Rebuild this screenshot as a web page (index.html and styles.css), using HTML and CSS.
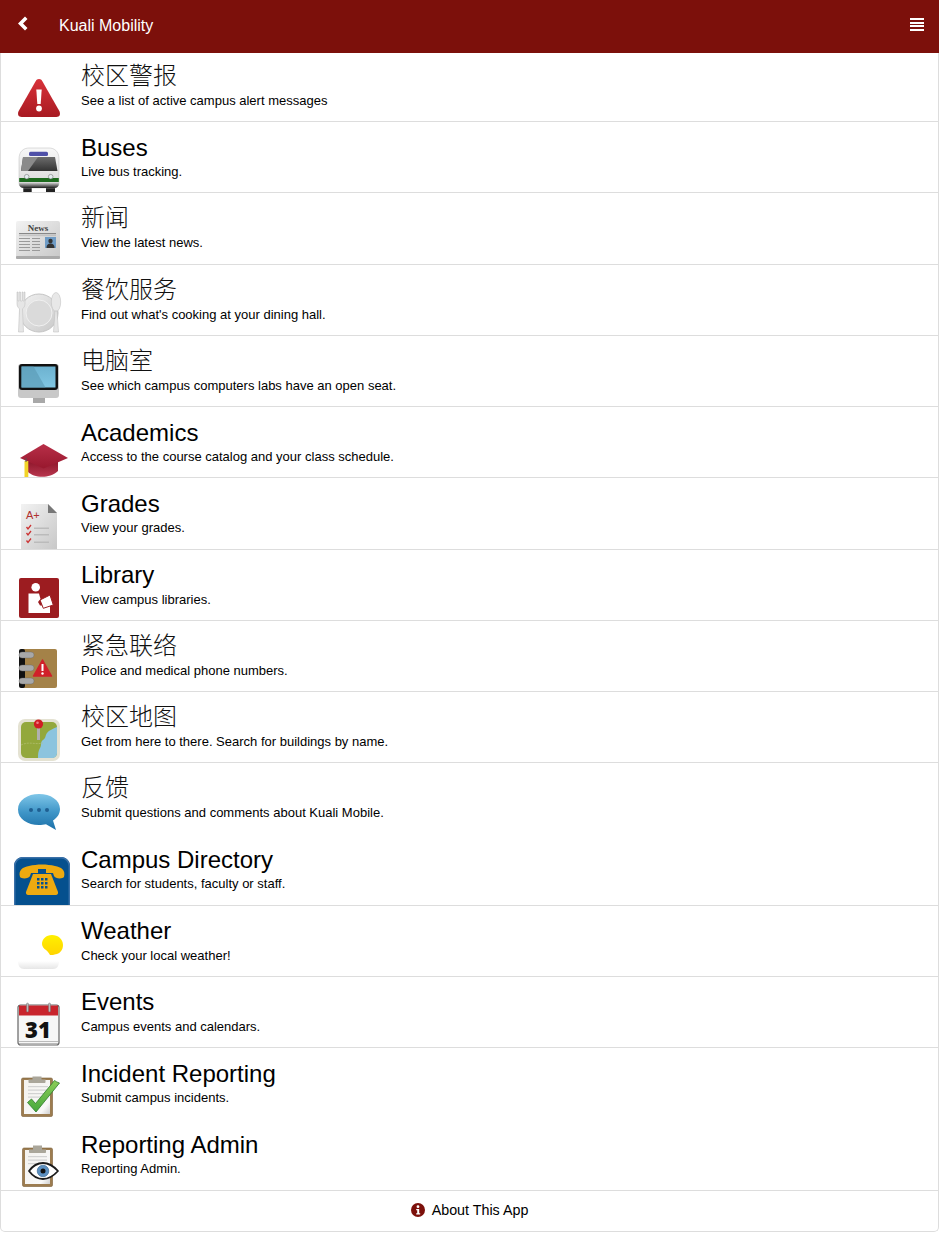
FILE: index.html
```html
<!DOCTYPE html>
<html lang="zh">
<head>
<meta charset="utf-8">
<title>Kuali Mobility</title>
<link rel="stylesheet" href="styles.css">
</head>
<body>
<svg class="defs" width="0" height="0" aria-hidden="true">
<defs>
<linearGradient id="gRed" x1="0" y1="0" x2="0" y2="1"><stop offset="0" stop-color="#d8323a"/><stop offset="1" stop-color="#a81a22"/></linearGradient>
<linearGradient id="gSilver" x1="0" y1="0" x2="0" y2="1"><stop offset="0" stop-color="#f8f8f8"/><stop offset="1" stop-color="#d8d8d8"/></linearGradient>
<linearGradient id="gBusLow" x1="0" y1="0" x2="0" y2="1"><stop offset="0" stop-color="#e6e6e6"/><stop offset="1" stop-color="#1c1c1c"/></linearGradient>
<linearGradient id="gBusGlass" x1="0" y1="0" x2="0" y2="1"><stop offset="0" stop-color="#6c6c6c"/><stop offset="1" stop-color="#333"/></linearGradient>
<linearGradient id="gPaper" x1="0" y1="0" x2="1" y2="1"><stop offset="0" stop-color="#f2f2f2"/><stop offset="1" stop-color="#c8c8c8"/></linearGradient>
<linearGradient id="gScreen" x1="0" y1="0" x2="0" y2="1"><stop offset="0" stop-color="#6db2d0"/><stop offset="1" stop-color="#80c6e2"/></linearGradient>
<linearGradient id="gChat" x1="0" y1="0" x2="0" y2="1"><stop offset="0" stop-color="#7fc6e8"/><stop offset=".5" stop-color="#3f96c8"/><stop offset="1" stop-color="#1c70a8"/></linearGradient>
<linearGradient id="gCap" x1="0" y1="0" x2="0" y2="1"><stop offset="0" stop-color="#b82f48"/><stop offset="1" stop-color="#98182e"/></linearGradient>
<linearGradient id="gCapLow" x1="0" y1="0" x2="0" y2="1"><stop offset="0" stop-color="#8a1428"/><stop offset="1" stop-color="#b8364e"/></linearGradient>
<linearGradient id="gSun" x1="0" y1="0" x2="0" y2="1"><stop offset="0" stop-color="#fff000"/><stop offset="1" stop-color="#ffd400"/></linearGradient>
<linearGradient id="gCloud" x1="0" y1="0" x2="0" y2="1"><stop offset="0" stop-color="#ffffff"/><stop offset="1" stop-color="#e6e6e6"/></linearGradient>
<linearGradient id="gBoard" x1="0" y1="0" x2="1" y2="1"><stop offset="0" stop-color="#f4f2ee"/><stop offset=".8" stop-color="#f8f8f8"/><stop offset="1" stop-color="#cfcfcf"/></linearGradient>
<linearGradient id="gGreen" x1="0" y1="0" x2="0" y2="1"><stop offset="0" stop-color="#8ccc58"/><stop offset="1" stop-color="#46a83c"/></linearGradient>
</defs>
</svg>
<header class="topbar">
  <svg class="back" viewBox="0 0 11 15" width="11" height="15"><path d="M8 0.500L1 7.500l7 7 2.500-2.500L6 7.500l4.500-4.500z" fill="#fff"/></svg>
  <span class="brand">Kuali Mobility</span>
  <span class="burger"><i></i><i></i><i></i><i></i></span>
</header>
<main class="list">
  <a class="row first">
    <svg class="ico" viewBox="0 0 56 48"><path d="M25 6c1.500 0 2.500.8 3.500 2.400L45.300 38c1.500 3 .5 6-3 6H7.700c-3.500 0-4.500-3-3-6L21.500 8.400C22.500 6.800 23.500 6 25 6z" fill="url(#gRed)"/><path d="M22.300 16.500h5.400L26.700 31h-3.400z" fill="#fff"/><circle cx="25" cy="35.500" r="2.900" fill="#fff"/></svg>
    <div class="txt"><h2 class="cjk">校区警报</h2><p>See a list of active campus alert messages</p></div>
  </a>
  <a class="row">
    <svg class="ico" viewBox="0 0 56 48"><rect x="9.300" y="42" width="8.400" height="5" fill="#222"/><rect x="32" y="42" width="9" height="5" fill="#222"/><path d="M5 14C5 6 10 3 15 3h20c5 0 10 3 10 11v24c0 3-2 5-5 5H10c-3 0-5-2-5-5z" fill="url(#gSilver)" stroke="#bbb" stroke-width=".5"/><rect x="15" y="6.700" width="19" height="4.300" rx="1.500" fill="#4f50a8"/><path d="M9 12h32l2.500 14H7z" fill="url(#gBusGlass)"/><path d="M9 12h15L14 26H7z" fill="#8a8a8a"/><path d="M5.200 33h39.600v4H5.200z" fill="#1d6a1e"/><path d="M5.200 37h39.600v2c0 2.500-2 4-4.800 4H10c-2.800 0-4.800-1.500-4.800-4z" fill="url(#gBusLow)"/><circle cx="12.700" cy="31.700" r="2.300" fill="#e4edf0" stroke="#666" stroke-width=".5"/><circle cx="36.700" cy="31.700" r="2.300" fill="#e4edf0" stroke="#666" stroke-width=".5"/></svg>
    <div class="txt"><h2>Buses</h2><p>Live bus tracking.</p></div>
  </a>
  <a class="row">
    <svg class="ico" viewBox="0 0 56 48"><rect x="2" y="5" width="44" height="38" rx="2" fill="url(#gPaper)"/><rect x="2" y="40" width="44" height="3" rx="1" fill="#aaa"/><text class="newshead" x="24" y="15" text-anchor="middle">News</text><rect x="5" y="17" width="37" height="1.200" fill="#888"/><rect x="5" y="19.500" width="37" height=".6" fill="#aaa"/><g fill="#9a9a9a"><rect x="5" y="22" width="11" height="1"/><rect x="18" y="22" width="8" height="1"/><rect x="5" y="25" width="11" height="1"/><rect x="18" y="25" width="8" height="1"/><rect x="5" y="28" width="11" height="1"/><rect x="18" y="28" width="8" height="1"/><rect x="5" y="31" width="11" height="1"/><rect x="18" y="31" width="8" height="1"/><rect x="5" y="34" width="11" height="1"/><rect x="18" y="34" width="8" height="1"/></g><rect x="31" y="21" width="11" height="11" fill="#6f9cc6"/><circle cx="36.500" cy="25" r="2.200" fill="#333"/><path d="M32.500 32c0-3.500 2-4.500 4-4.500s4 1 4 4.500z" fill="#333"/></svg>
    <div class="txt"><h2 class="cjk">新闻</h2><p>View the latest news.</p></div>
  </a>
  <a class="row">
    <svg class="ico" viewBox="0 0 56 48"><circle cx="25" cy="26" r="19" fill="url(#gPaper)" stroke="#c4c4c4"/><circle cx="25" cy="26" r="13" fill="#dadada" stroke="#f0f0f0"/><path d="M3 5v12c0 3 2 4 2.500 5l-1 23h5l-1-23c.5-1 2.500-2 2.500-5V5h-1v9H9V5H8v9H6.500V5H5v9H4V5z" fill="#e6e6e6" stroke="#bbb" stroke-width=".5"/><ellipse cx="42" cy="15" rx="4.700" ry="9.500" fill="#e8e8e8" stroke="#bbb" stroke-width=".5"/><path d="M41 24h2l1.500 21h-5z" fill="#e6e6e6" stroke="#bbb" stroke-width=".5"/></svg>
    <div class="txt"><h2 class="cjk">餐饮服务</h2><p>Find out what's cooking at your dining hall.</p></div>
  </a>
  <a class="row">
    <svg class="ico" viewBox="0 0 56 48"><rect x="19" y="38" width="12" height="6" fill="#a8a8a8"/><rect x="4" y="5" width="41" height="34" rx="3" fill="#c8c8c8"/><rect x="5" y="5" width="39" height="26" rx="3" fill="#111"/><rect x="7.500" y="7.500" width="34" height="21" fill="url(#gScreen)"/><path d="M7.500 7.500h12l12 21h-24z" fill="#5d9cb8" opacity=".7"/></svg>
    <div class="txt"><h2 class="cjk">电脑室</h2><p>See which campus computers labs have an open seat.</p></div>
  </a>
  <a class="row">
    <svg class="ico" viewBox="0 0 56 48"><path d="M14 30v12c5 5 20 8 30-1V30z" fill="url(#gCapLow)"/><path d="M29.500 14L54 28 29.500 38.500 6 28z" fill="url(#gCap)"/><rect x="10.500" y="31" width="3.800" height="17" fill="#f2d428"/><path d="M12 28v4" stroke="#555" stroke-width="1"/></svg>
    <div class="txt"><h2>Academics</h2><p>Access to the course catalog and your class schedule.</p></div>
  </a>
  <a class="row">
    <svg class="ico" viewBox="0 0 56 48"><path d="M7 3h27l9 9v36H7z" fill="url(#gPaper)"/><path d="M34 3l9 9h-9z" fill="#777"/><text class="grade" x="12" y="18">A+</text><g fill="none" stroke="#c33" stroke-width="1.300"><path d="M12.500 26l1.500 2 3-4"/><path d="M12.500 32l1.500 2 3-4"/><path d="M12.500 39.500l1.500 2 3-4"/></g><g fill="#bbb"><rect x="20" y="26.500" width="15" height="1.500"/><rect x="20" y="33" width="15" height="1.500"/><rect x="20" y="40.500" width="15" height="1.500"/></g></svg>
    <div class="txt"><h2>Grades</h2><p>View your grades.</p></div>
  </a>
  <a class="row">
    <svg class="ico" viewBox="0 0 56 48"><rect x="5" y="6" width="40" height="40" rx="2" fill="#9c1c20"/><circle cx="21.700" cy="15.300" r="4.300" fill="#fff"/><path d="M14.500 21.500H25l1.500 5.500-2.500 3 2 3.500H36v7.500H14.500z" fill="#fff"/><path d="M26 28l10-5 3.300 10-10 3.300z" fill="#fff" stroke="#9c1c20" stroke-width="1"/></svg>
    <div class="txt"><h2>Library</h2><p>View campus libraries.</p></div>
  </a>
  <a class="row">
    <svg class="ico" viewBox="0 0 56 48"><rect x="7" y="5" width="36" height="39" rx="2" fill="#a48248"/><rect x="5" y="5" width="6" height="39" rx="2" fill="#111"/><g fill="#a8a8a8" stroke="#666" stroke-width=".4"><rect x="5" y="8" width="15" height="6" rx="3"/><rect x="5" y="21" width="15" height="6" rx="3"/><rect x="5" y="34" width="15" height="6" rx="3"/></g><path d="M28.500 16l9 16h-18z" fill="#d0202a" stroke="#d0202a" stroke-width="1.500" stroke-linejoin="round"/><rect x="27.500" y="20" width="2" height="7" fill="#fff"/><circle cx="28.500" cy="29.500" r="1.200" fill="#fff"/></svg>
    <div class="txt"><h2 class="cjk">紧急联络</h2><p>Police and medical phone numbers.</p></div>
  </a>
  <a class="row">
    <svg class="ico" viewBox="0 0 56 48"><rect x="4" y="4" width="42" height="42" rx="7" fill="#e4e2d2"/><rect x="7" y="7" width="36" height="36" rx="5" fill="#93a83c"/><path d="M43 12c-4 2-8 3-10 6s-1 5-4 7-1 5-3 8-2 7-2 10h14c3 0 5-2 5-5z" fill="#8cc4de"/><path d="M7 30c8-4 14 0 22-2" stroke="#b8c47c" stroke-width=".6" fill="none" stroke-dasharray="2 1"/><rect x="23" y="10" width="3" height="15" fill="#b0b0b0"/><circle cx="24.500" cy="9" r="4.600" fill="#d01c24"/><circle cx="23.500" cy="7.800" r="1.300" fill="#f08088"/></svg>
    <div class="txt"><h2 class="cjk">校区地图</h2><p>Get from here to there. Search for buildings by name.</p></div>
  </a>
  <a class="row plain">
    <svg class="ico" viewBox="0 0 56 48"><path d="M25 8c11.500 0 21 6 21 15 0 5-3 9-7 11.500L42 44l-10-5.800c-2 .5-4.500.8-7 .8C13.500 39 4 33 4 23.500S13.500 8 25 8z" fill="url(#gChat)"/><circle cx="17" cy="24" r="2" fill="#1f5f92"/><circle cx="25" cy="24" r="2" fill="#1f5f92"/><circle cx="33" cy="24" r="2" fill="#1f5f92"/></svg>
    <div class="txt"><h2 class="cjk">反馈</h2><p>Submit questions and comments about Kuali Mobile.</p></div>
  </a>
  <a class="row">
    <svg class="ico" viewBox="0 0 56 48"><path d="M0 48V9c0-5 4-9 9-9h38c5 0 9 4 9 9v39z" fill="#05508e"/><path d="M.7 48V9c0-4.600 3.700-8.300 8.300-8.300h38c4.600 0 8.300 3.700 8.300 8.300v39" fill="none" stroke="#3a70a8" stroke-width="1.500"/><path d="M6 20c-2-7 3-10 9-11 8-2 18-2 26 0 6 1 11 4 9 11-1 2-9 2-10-1l-1-3H17l-1 3c-1 3-9 3-10 1z" fill="#eeaa10"/><path d="M19 17h18l7 18c.5 2-1 3-2 3H14c-1 0-2.500-1-2-3z" fill="#eeaa10"/><g fill="#05508e"><rect x="24" y="12" width="8" height="4"/><rect x="23" y="21" width="2.500" height="2.500"/><rect x="27" y="21" width="2.500" height="2.500"/><rect x="31" y="21" width="2.500" height="2.500"/><rect x="23" y="25" width="2.500" height="2.500"/><rect x="27" y="25" width="2.500" height="2.500"/><rect x="31" y="25" width="2.500" height="2.500"/><rect x="23" y="29" width="2.500" height="2.500"/><rect x="27" y="29" width="2.500" height="2.500"/><rect x="31" y="29" width="2.500" height="2.500"/></g></svg>
    <div class="txt"><h2>Campus Directory</h2><p>Search for students, faculty or staff.</p></div>
  </a>
  <a class="row">
    <svg class="ico" viewBox="0 0 56 48"><path d="M4 33h41c0 5-2 8-6 8H10c-4 0-6-3-6-8z" fill="url(#gCloud)"/><path d="M28 16c0-5 4-9 10-9s11 4 11 10c0 5-3 8-6 9-2 .5-3 .5-4 1l-3 0c-1-2-2-3-4-5-2-1-4-4-4-6z" fill="url(#gSun)"/></svg>
    <div class="txt"><h2>Weather</h2><p>Check your local weather!</p></div>
  </a>
  <a class="row">
    <svg class="ico" viewBox="0 0 56 48"><rect x="4" y="5" width="41" height="40" rx="2.500" fill="#f6f6f6" stroke="#666" stroke-width="1.200"/><rect x="5" y="5.500" width="39" height="10" fill="#c8242c"/><rect x="5" y="41" width="39" height="1" fill="#bbb"/><rect x="5" y="43" width="39" height="1" fill="#bbb"/><rect x="12.500" y="3" width="2" height="9" rx="1" fill="#bbb" stroke="#666" stroke-width=".4"/><rect x="34.500" y="3" width="2" height="9" rx="1" fill="#bbb" stroke="#666" stroke-width=".4"/><text class="day" x="24" y="38" text-anchor="middle">31</text></svg>
    <div class="txt"><h2>Events</h2><p>Campus events and calendars.</p></div>
  </a>
  <a class="row plain">
    <svg class="ico" viewBox="0 0 56 48"><rect x="7.500" y="7" width="31" height="38.500" rx="1.500" fill="#9c7c50" stroke="#7a5e38" stroke-width=".6"/><rect x="10" y="9" width="26" height="34" fill="url(#gBoard)"/><path d="M14.500 11V8.500h4V5.500h9v3h4V11c0 .6-.4 1-1 1h-15c-.6 0-1-.4-1-1z" fill="#aaa69a"/><g fill="#d2d2d2"><rect x="14" y="15" width="20" height="1.200"/><rect x="14" y="18.500" width="20" height="1.200"/><rect x="14" y="22" width="20" height="1.200"/><rect x="14" y="25.500" width="14" height="1.200"/></g><path d="M13.500 31.500l4-3.500 4 4.500L40.500 9.500c1.500 1 3 2 5 2.500L22 41z" fill="url(#gGreen)" stroke="#2c7a2c" stroke-width=".8" stroke-linejoin="round"/></svg>
    <div class="txt"><h2>Incident Reporting</h2><p>Submit campus incidents.</p></div>
  </a>
  <a class="row">
    <svg class="ico" viewBox="0 0 56 48"><rect x="8.500" y="6" width="30" height="38.500" rx="1.500" fill="#9c7c50" stroke="#7a5e38" stroke-width=".6"/><rect x="11" y="8" width="25" height="34" fill="url(#gBoard)"/><path d="M15 10V7.500h4V3.500h9v4h4V10c0 .6-.4 1-1 1H16c-.6 0-1-.4-1-1z" fill="#aaa69a"/><g fill="#d2d2d2"><rect x="14" y="14" width="19" height="1.200"/><rect x="14" y="17.500" width="19" height="1.200"/><rect x="14" y="21" width="19" height="1.200"/></g><path d="M15 29c4-5.500 9-8 14-8s10 2.500 15 8c-5 5.500-10 8-15 8s-10-2.500-14-8z" fill="#fff" stroke="#1b1b1b" stroke-width="1.800" stroke-linejoin="round"/><circle cx="29" cy="29" r="5.800" fill="#5b8fc0" stroke="#2f5f8c" stroke-width=".6"/><circle cx="29" cy="29" r="2.500" fill="#111"/></svg>
    <div class="txt"><h2>Reporting Admin</h2><p>Reporting Admin.</p></div>
  </a>
  <a class="about">
    <svg class="info" viewBox="0 0 14 14" width="14" height="14"><circle cx="7" cy="7" r="7" fill="#7c100b"/><circle cx="7" cy="3.700" r="1.400" fill="#fff"/><path d="M5.200 6h3v4.200h1v1.300H5.200v-1.300h1V7.300h-1z" fill="#fff"/></svg>
    <span>About This App</span>
  </a>
</main>
</body>
</html>
```
FILE: styles.css
```css
html, body {
  margin: 0;
  padding: 0;
  background: #fff;
}
body {
  font-family: "Liberation Sans", Arial, sans-serif;
  color: #000;
}
.defs {
  position: absolute;
}
.topbar {
  height: 53px;
  background: #7c100b;
  display: flex;
  align-items: flex-start;
  color: #fff;
}
.back {
  margin: 16px 0 0 17px;
  flex: none;
}
.brand {
  margin: 17px 0 0 31px;
  font-size: 16px;
  line-height: 18px;
}
.burger {
  margin: 18px 15px 0 auto;
  width: 14px;
  height: 13px;
  display: flex;
  flex-direction: column;
  justify-content: space-between;
}
.burger i {
  display: block;
  height: 2px;
  background: #fff;
}
.list {
  width: 939px;
  box-sizing: border-box;
  border-left: 1px solid #ddd;
  border-right: 1px solid #ddd;
  border-bottom: 1px solid #ddd;
  border-radius: 0 0 5px 5px;
}
.row {
  height: 71.235px;
  box-sizing: border-box;
  display: flex;
  align-items: flex-start;
  border-bottom: 1px solid #ddd;
  overflow: hidden;
}
.row.first {
  height: 69.2px;
}
.row.plain {
  border-bottom: 0;
}
.ico {
  flex: none;
  width: 56px;
  height: 48px;
  margin: 22.7px 0 0 13px;
}
.first .ico {
  margin-top: 20px;
}
.txt {
  margin: 10.45px 0 0 11px;
  min-width: 0;
}
.first .txt {
  margin-top: 8.45px;
}
.txt h2 {
  margin: 0;
  font-size: 24px;
  line-height: 30.5px;
  font-weight: 400;
}
.txt h2.cjk {
  font-family: "Noto Sans CJK SC", sans-serif;
  font-weight: 300;
  color: #111;
  margin: -2.5px 0 2.5px;
}
.txt p {
  margin: 0;
  font-size: 13px;
  line-height: 17px;
}
.about {
  height: 40.3px;
  padding-bottom: 1.5px;
  display: flex;
  align-items: center;
  justify-content: center;
  gap: 7px;
  font-size: 14.3px;
  box-sizing: border-box;
}
.info {
  flex: none;
  margin-top: -1px;
}
.newshead {
  font-family: "Liberation Serif", serif;
  font-size: 9px;
  font-weight: 700;
  fill: #444;
}
.grade {
  font-family: "Liberation Sans", sans-serif;
  font-size: 11px;
  fill: #b03030;
}
.day {
  font-family: "Open Sans", "Liberation Sans", sans-serif;
  font-weight: 800;
  font-size: 22px;
  fill: #111;
}
```
